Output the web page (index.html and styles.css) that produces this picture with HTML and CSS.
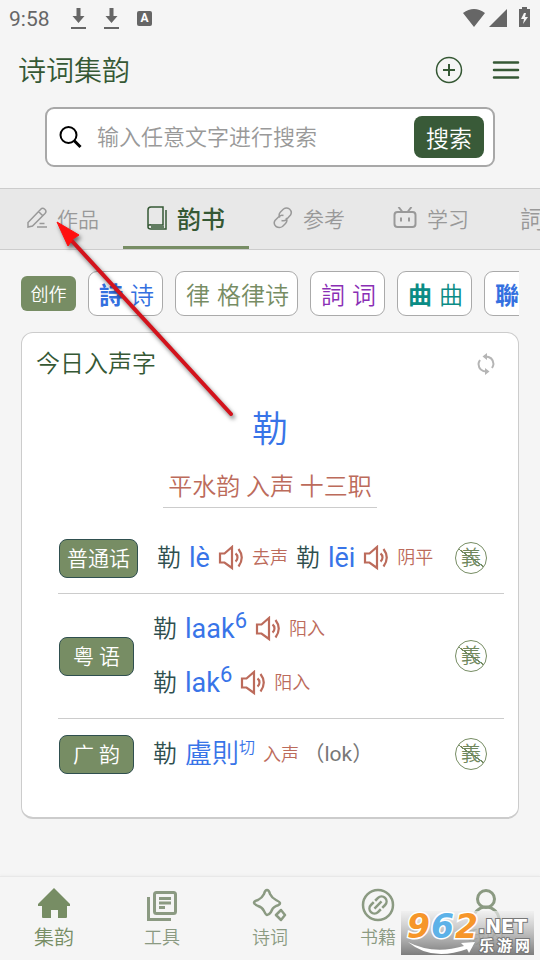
FILE: index.html
```html
<!DOCTYPE html>
<html lang="zh-CN">
   <head>
      <title>诗词集韵</title>
      <meta charset="utf-8">
      <meta name="viewport" content="width=device-width, initial-scale=1">
      <link rel="stylesheet" href="styles.css">
   </head>

   <body>
      <!-- shared icons -->
      <svg class="defs" aria-hidden="true">
         <symbol id="speaker" viewBox="0 0 26 26">
            <path d="M2 8.500h4.500L14 2v21l-7.500-5.500H2zM17.500 8.500a5 5 0 0 1 0 8M20.500 4q6.500 8.500 0 17.500" fill="none" stroke="currentColor" stroke-width="2.200"/>
         </symbol>
         <symbol id="download" viewBox="0 0 18 22">
            <path d="M6.500 0h4v8h4L8.500 15l-6-7h4zM1 19h15v2H1z" fill="currentColor"/>
         </symbol>
         <symbol id="chain" viewBox="0 0 20 22">
            <path d="M7 10.500q-2-3 .5-5.500l3-3q3-2 6 0 3 3 1 6l-4 4.500q-2 2-5 1M13 11q2 3-.5 5.500l-3 3q-3 2-6.500 0-3-3-1-6l4-4q2-2 4.500-1" fill="none" stroke="currentColor" stroke-width="1.500"/>
         </symbol>
      </svg>

      <div class="status">
         <span class="time">9:58</span>
         <svg class="down" width="18" height="22"><use href="#download"/></svg>
         <svg class="down" width="18" height="22"><use href="#download"/></svg>
         <span class="ime">A</span>
         <svg class="signal" width="68" height="22" viewBox="0 0 68 22" fill="currentColor">
            <path d="M0 5Q11-3 22 5L11 19zM26 19L44 1v18zM57 1h2v-2h5v2h3v18H56V1z"/>
            <path d="M61 5l-3 6h3l-1 5 5-7h-3l1-4z" fill="#f5f5f5"/>
         </svg>
      </div>

      <header class="header">
         <h1>诗词集韵</h1>
         <button type="button" aria-label="新建">
            <svg width="28" height="28" viewBox="0 0 28 28" fill="none" stroke="currentColor" stroke-width="1.500"><circle cx="14" cy="14" r="12.500"/><path d="M8 14h12M14 8v12" stroke-width="2"/></svg>
         </button>
         <button type="button" aria-label="菜单">
            <svg width="28" height="28" viewBox="0 0 28 28" fill="none" stroke="currentColor" stroke-width="2.500" stroke-linecap="round"><path d="M2 6.500h24M2 14h24M2 21.500h24"/></svg>
         </button>
      </header>

      <form class="search" action="#">
         <svg width="24" height="24" viewBox="0 0 24 24" fill="none" stroke="#000" stroke-width="2"><circle cx="9.500" cy="10" r="8"/><path d="M15 15.500l6.500 6.500" stroke-width="3"/></svg>
         <input type="text" aria-label="搜索" placeholder="输入任意文字进行搜索">
         <button type="submit">搜索</button>
      </form>

      <nav class="tabs">
         <a href="#">
            <svg width="20" height="22" viewBox="0 0 20 22" fill="none" stroke="currentColor" stroke-width="1.500"><path d="M1 20v-4.500L13.500 2.500a3 3 0 0 1 4.500 4L5.500 19zM11.500 4.500l4 4M12.500 16.500h5M10 20h10"/></svg>
            作品
         </a>
         <a href="#" class="on">
            <svg width="20" height="24" viewBox="0 0 20 24" fill="none" stroke="currentColor" stroke-width="1.500"><path d="M4 1h12v18H4a2 2 0 0 0-3 2V4q0-3 3-3zM1 21q0 2 3 2h15V4M4 21h13"/></svg>
            韵书
         </a>
         <a href="#">
            <svg width="20" height="22"><use href="#chain"/></svg>
            参考
         </a>
         <a href="#">
            <svg width="24" height="22" viewBox="0 0 24 22" fill="none" stroke="currentColor" stroke-width="2"><rect x="1.500" y="5" width="21" height="15" rx="3"/><path d="M5.500 0l4 5M18.500 0l-4 5M8 10.500v4M16 10.500v4"/></svg>
            学习
         </a>
         <a href="#"><span class="ci">詞</span>诗词</a>
      </nav>

      <div class="chips">
         <button type="button" class="create">创作</button>
         <button type="button" class="chip blue"><b>詩</b>诗</button>
         <button type="button" class="chip green"><span>律</span>格律诗</button>
         <button type="button" class="chip purple"><span>詞</span>词</button>
         <button type="button" class="chip teal"><b>曲</b>曲</button>
         <button type="button" class="chip blue"><b>聯</b>联</button>
      </div>

      <main class="card">
         <div class="card-head">
            <h2>今日入声字</h2>
            <button type="button" aria-label="刷新">
               <svg width="22" height="24" viewBox="0 0 22 24" fill="none" stroke="currentColor" stroke-width="2"><path d="M10 4.500q8 0 8.500 7.500-.2 2-1.500 4M12 19.500q-8 0-8.500-7.500.2-2 1.500-4"/><path d="M12 1v7L7.500 4.500zM10 16v7l4.500-3.500z" fill="currentColor" stroke="none"/></svg>
            </button>
         </div>
         <div class="word">勒</div>
         <div class="rhyme"><span>平水韵 入声 十三职</span></div>

         <div class="row">
            <span class="badge">普通话</span>
            <div class="lines">
               <div class="line">
                  <span>勒</span><a href="#">lè</a><svg width="26" height="26"><use href="#speaker"/></svg><small>去声</small>
                  <span>勒</span><a href="#">lēi</a><svg width="26" height="26"><use href="#speaker"/></svg><small>阴平</small>
               </div>
            </div>
            <button type="button" class="yi">義</button>
         </div>
         <div class="row">
            <span class="badge">粤 语</span>
            <div class="lines">
               <div class="line">
                  <span>勒</span><a href="#">laak<sup>6</sup></a><svg width="26" height="26"><use href="#speaker"/></svg><small>阳入</small>
               </div>
               <div class="line">
                  <span>勒</span><a href="#">lak<sup>6</sup></a><svg width="26" height="26"><use href="#speaker"/></svg><small>阳入</small>
               </div>
            </div>
            <button type="button" class="yi">義</button>
         </div>
         <div class="row">
            <span class="badge">广 韵</span>
            <div class="lines">
               <div class="line">
                  <span>勒</span><a href="#" class="han">盧則<sup>切</sup></a><small>入声 <i>（lok）</i></small>
               </div>
            </div>
            <button type="button" class="yi">義</button>
         </div>
      </main>

      <nav class="bottom">
         <a href="#" class="on">
            <svg width="36" height="36" viewBox="0 0 36 36" fill="currentColor"><path d="M18 2l16 16v2h-3v11q0 1-1 1h-8v-8h-7v8H7q-1 0-1-1V20H2v-2z"/></svg>
            集韵
         </a>
         <a href="#">
            <svg width="36" height="36" viewBox="0 0 36 36" fill="none" stroke="currentColor" stroke-width="3"><rect x="10.500" y="6.500" width="21" height="21" rx="2"/><path d="M4.500 11v22.500H27M15 12.500h12M15 17h12M15 21.500h6"/></svg>
            工具
         </a>
         <a href="#">
            <svg width="36" height="36" viewBox="0 0 36 36" fill="none" stroke="currentColor" stroke-width="2.500" stroke-linejoin="round"><path d="M15 4q2 0 3 4 2 4 6 6t4 3q0 2-4 3-4 2-5 6-2 3-4 3-1 0-3-4-2-4-6-5-4-2-4-3 0-2 4-3 4-2 6-6 1-4 3-4zM29 24l4 5-4 5-5-5z"/></svg>
            诗词
         </a>
         <a href="#">
            <svg width="36" height="36" viewBox="0 0 36 36" fill="none" stroke="currentColor" stroke-width="2.500"><circle cx="18" cy="19" r="15"/><g transform="rotate(-45 18 19)"><path d="M17 14h-4a5 5 0 0 0 0 10h4M19 14h4a5 5 0 0 1 0 10h-4M13 19h10"/></g></svg>
            书籍
         </a>
         <a href="#">
            <svg width="36" height="36" viewBox="0 0 36 36" fill="none" stroke="currentColor" stroke-width="3"><circle cx="18" cy="13" r="8.500"/><path d="M5 36v-2a13 13 0 0 1 26 0v2"/></svg>
            我的
         </a>
      </nav>

      <!-- red pointer -->
      <svg class="pointer" width="190" height="210" viewBox="0 0 190 210">
         <path d="M181 202L22 29" stroke="#d3131c" stroke-width="4" stroke-linecap="round"/>
         <path d="M7 10l22 13-6 4-5 7z" fill="#ff1010" stroke="#ff1010"/>
      </svg>

      <!-- site mark -->
      <svg class="mark" width="133" height="44" viewBox="0 0 133 44">
         <defs><linearGradient id="g" x2="0" y2="1"><stop offset="0" stop-color="#eee" stop-opacity=".7"/><stop offset="1" stop-color="#777" stop-opacity=".95"/></linearGradient></defs>
         <rect width="133" height="44" fill="url(#g)"/>
         <path d="M7 31q25 13 56 4l-3-3 14-1-6 11-2-4Q31 51 7 31z" fill="#fff"/>
         <g class="num"><text x="6" y="27" fill="#f6962a">9</text><text x="30" y="27" fill="#5db2e8">6</text><text x="54" y="27" fill="#f6962a">2</text></g>
         <text class="net" x="77" y="22">.NET</text>
         <text class="net cn" x="78" y="40">乐</text><text class="net cn" x="96" y="40">游</text><text class="net cn" x="114" y="40">网</text>
      </svg>
   </body>
</html>
```
FILE: styles.css
```css
* {box-sizing: border-box;}
body {margin: 0;min-height: 100vh;display: flex;flex-direction: column;background-color: #f5f5f5;color: #355834;font-family: Roboto, "Noto Sans CJK SC", sans-serif;font-weight: 350;overflow-x: hidden;position: relative;}
button, input {font: inherit;color: inherit;border: 0;padding: 0;background: none;}
a {color: inherit;text-decoration: none;}
h1, h2 {margin: 0;font-weight: 350;}
svg {flex: none;display: block;}
.defs {position: absolute;width: 0;height: 0;}

.status {height: 37px;padding: 0 9px;display: flex;align-items: center;color: #666;}
.time {font-size: 21px;font-weight: 400;width: 61px;}
.down {margin-right: 15px;}
.ime {width: 15px;height: 15px;border-radius: 2px;background-color: #666;color: #fff;font: bold 12px/15px Roboto, sans-serif;text-align: center;margin-left: 1px;}
.signal {margin-left: auto;overflow: visible;}

.header {height: 66px;padding: 0 20px 0 18px;display: flex;align-items: center;gap: 29px;}
.header h1 {flex: 1;font-size: 28px;line-height: 40px;padding-top: 4px;}

.search {height: 60px;margin: 4px 45px 21px;padding: 0 9px 0 12px;display: flex;align-items: center;gap: 14px;border: 2px solid #a8a8a8;border-radius: 9px;background-color: #fff;}
.search input {flex: 1;min-width: 0;font-size: 22px;outline: none;}
.search input::placeholder {color: #999;}
.search button {width: 70px;height: 42px;border-radius: 8px;background-color: #395a38;color: #fff;font-size: 23px;}

.tabs {display: flex;height: 62px;padding-left: 3px;border: solid #ccc;border-width: 1px 0;background-color: #e8e8e8;color: #999;font-size: 21px;overflow: hidden;}
.tabs a {flex: none;display: flex;align-items: center;gap: 10px;padding: 0 24px;border-bottom: 3px solid transparent;white-space: nowrap;}
.tabs .on {border-color: #778d64;color: #355834;font-size: 24px;font-weight: 500;}
.ci {padding-left: 3px;font-size: 24px;}

.chips {display: flex;align-items: center;gap: 12px;margin: 20px 21px 16px;height: 46px;overflow: hidden;}
.chips button {flex: none;white-space: nowrap;}
.create {width: 55px;height: 35px;border-radius: 6px;background-color: #778d64;color: #fff;font-size: 18px;}
.chips .chip {display: flex;align-items: center;gap: 7px;height: 45px;padding: 0 8px 0 10px;border: 1px solid #aaa;border-radius: 9px;background-color: #fff;font-size: 24px;}
.blue {color: #3470e0;}
.green {color: #778d64;}
.purple {color: #8a2fb5;}
.teal {color: #0a8c85;}

.card {margin: 0 21px;padding: 8px 14px 28px;border: 1px solid #ccc;border-bottom-width: 2px;border-radius: 12px;background-color: #fff;}
.card-head {display: flex;justify-content: space-between;align-items: center;height: 46px;padding-right: 7px;}
.card-head h2 {font-size: 24px;line-height: 26px;}
.card-head button {color: #b5b5b5;}
.word {height: 80px;font-size: 36px;line-height: 86px;color: #3874e8;text-align: center;}
.rhyme {text-align: center;margin-bottom: 15px;}
.rhyme span {display: inline-block;padding: 0 5px;font-size: 24px;line-height: 40px;color: #bc6b5b;border-bottom: 1px solid #ccc;}

.row {display: flex;align-items: center;margin-left: 22px;padding: 8px 17px 8px 1px;border-bottom: 1px solid #ccc;}
.row:last-child {border-bottom: 0;}
.badge {flex: none;min-width: 75px;height: 39px;padding: 0 7px;border: 1px solid #2f4f4f;border-radius: 8px;background-color: #778d64;color: #fff;font-size: 21px;line-height: 39px;text-align: center;}
.lines {flex: 1;margin-left: 19px;}
.line {display: flex;align-items: center;gap: 8px;height: 54px;line-height: 56px;font-size: 24px;color: #2f4f4f;white-space: nowrap;}
.line a {font-size: 27px;font-weight: 400;color: #3874e8;}
.line .han {font-weight: 350;}
.line svg {color: #bc6b5b;}
.line small {font-size: 18px;color: #bc6b5b;}
.line i {font-size: 21px;font-style: normal;font-weight: 400;color: #777;}
sup {font-size: 22px;line-height: 0;vertical-align: 10px;}
.han sup {font-size: 16px;}
.row .yi {flex: none;width: 32px;height: 32px;border: 1px solid #778d64;border-radius: 50%;font-size: 20px;line-height: 28px;color: #6f875c;background: linear-gradient(35deg, transparent 49%, #778d64 49%, #778d64 52%, transparent 52%);}

.bottom {display: flex;height: 84px;margin-top: auto;padding-top: 9px;border-top: 1px solid #e8e8e8;box-shadow: 0 -1px 2px #eee;color: #8b9a82;font-size: 18px;}
.bottom a {flex: 1;display: flex;flex-direction: column;align-items: center;line-height: 32px;}
.bottom .on {color: #778d64;font-size: 20px;}

.pointer {position: absolute;left: 50px;top: 212px;filter: drop-shadow(2px 3px 2px #0008);pointer-events: none;}
.mark {position: absolute;right: 6px;bottom: 5px;}
.num {font: italic bold 33px "DejaVu Sans", sans-serif;stroke: #fff;stroke-width: 3px;paint-order: stroke;}
.net {font: bold 19px "DejaVu Sans", sans-serif;fill: #fff;stroke: #777;stroke-width: 2px;paint-order: stroke;}
.cn {font: bold 15px "Noto Sans CJK SC", sans-serif;}
```
